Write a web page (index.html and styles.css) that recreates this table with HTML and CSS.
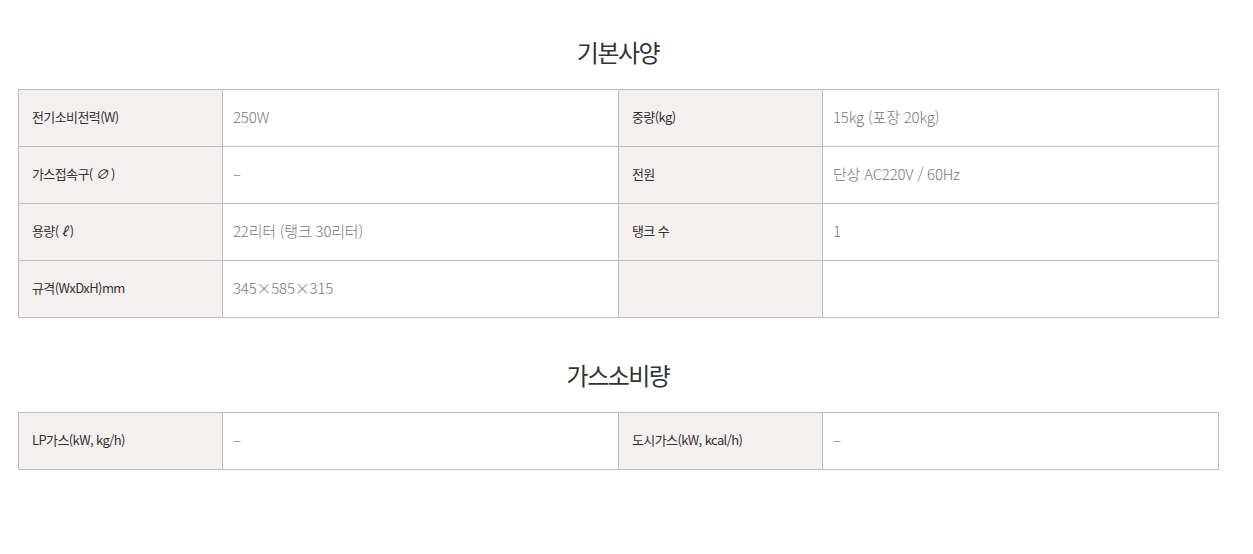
FILE: index.html
```html
<!DOCTYPE html>
<html lang="ko">
<head>
<meta charset="utf-8">
<title>기본사양</title>
<link rel="stylesheet" href="styles.css">
</head>
<body>
<div class="wrap">
  <section class="spec">
    <h2 class="spec-title">기본사양</h2>
    <table class="spec-table">
      <colgroup><col class="c-th"><col class="c-td"><col class="c-th"><col class="c-td"></colgroup>
      <tbody>
        <tr><th>전기소비전력(W)</th><td>250W</td><th>중량(kg)</th><td>15kg (포장 20kg)</td></tr>
        <tr><th>가스접속구(<span class="sym">∅</span>)</th><td>–</td><th>전원</th><td>단상 AC220V / 60Hz</td></tr>
        <tr><th>용량(<span class="sym">ℓ</span>)</th><td>22리터 (탱크 30리터)</td><th>탱크 수</th><td>1</td></tr>
        <tr><th>규격(WxDxH)mm</th><td>345×585×315</td><th></th><td></td></tr>
      </tbody>
    </table>
  </section>
  <section class="spec">
    <h2 class="spec-title">가스소비량</h2>
    <table class="spec-table">
      <colgroup><col class="c-th"><col class="c-td"><col class="c-th"><col class="c-td"></colgroup>
      <tbody>
        <tr><th>LP가스(kW, kg/h)</th><td>–</td><th>도시가스(kW, kcal/h)</th><td>–</td></tr>
      </tbody>
    </table>
  </section>
</div>
</body>
</html>
```
FILE: styles.css
```css
html, body {
  margin: 0;
  padding: 0;
  background: #fff;
}
body {
  font-family: "Noto Sans CJK KR", "Noto Sans", sans-serif;
  color: #333;
}
.wrap {
  width: 1200px;
  margin-left: 18px;
  padding-top: 34px;
}
.spec + .spec {
  margin-top: 39px;
}
.spec-title {
  margin: 0 0 19px;
  text-align: center;
  font-size: 24px;
  font-weight: 400;
  line-height: 36px;
  letter-spacing: -1.5px;
  color: #333;
}
.spec-table {
  width: 100%;
  border-collapse: collapse;
  table-layout: fixed;
  border: 1px solid #bdbdbd;
}
.c-th { width: 204px; }
.c-td { width: 396px; }
.spec-table th,
.spec-table td {
  box-sizing: border-box;
  height: 57px;
  padding: 0 0 3px;
  border: 1px solid #bdbdbd;
  text-align: left;
  vertical-align: middle;
}
.spec-table th {
  background: #f4f0ef;
  padding-left: 13px;
  font-size: 13px;
  font-weight: 400;
  color: #333;
  letter-spacing: -0.6px;
}
.spec-table th .sym {
  display: inline-block;
  padding: 0 3px;
  font-style: italic;
}
.spec-table td {
  padding-left: 10px;
  font-size: 15px;
  font-weight: 300;
  color: #777;
  letter-spacing: -0.2px;
}
```
